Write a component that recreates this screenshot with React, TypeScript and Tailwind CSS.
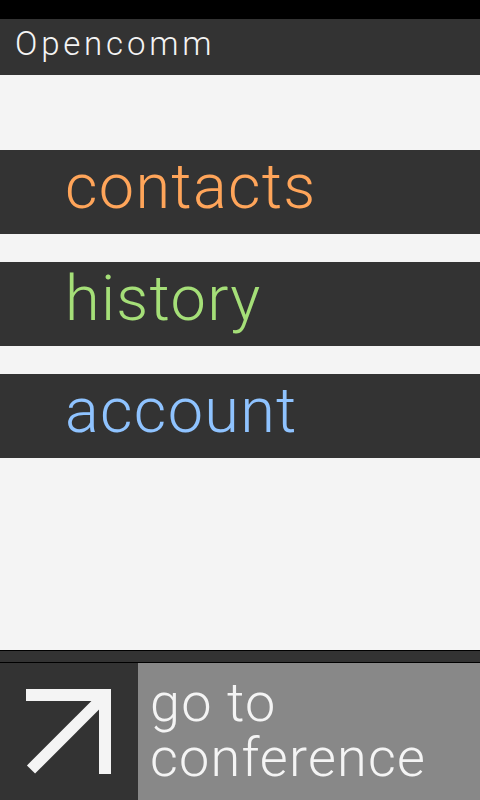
import React from "react";

const font = { fontFamily: "Roboto, 'Liberation Sans', sans-serif" };

function MenuItem({ label, color }: { label: string; color: string }) {
  return (
    <div className="h-[84px] bg-[#333333] flex items-start pl-[65px] pt-[5px]">
      <span className={`text-[63px] font-light leading-none tracking-[1.3px] ${color}`}>{label}</span>
    </div>
  );
}

export default function App() {
  return (
    <div className="w-[480px] h-[800px] bg-[#f4f4f4] flex flex-col overflow-hidden" style={font}>
      <div className="h-[19px] bg-black shrink-0" />
      <div className="h-[56px] bg-[#333333] flex items-start pl-[15px] pt-[8px] shrink-0">
        <span className="text-[33px] font-light text-[#f4f4f4] leading-none tracking-[3.8px]">Opencomm</span>
      </div>
      <div className="flex flex-col gap-[28px] pt-[75px]">
        <MenuItem label="contacts" color="text-[#ffa55a]" />
        <MenuItem label="history" color="text-[#a5df78]" />
        <MenuItem label="account" color="text-[#8fc3ff]" />
      </div>
      <div className="flex-1" />
      <div className="h-[13px] bg-[#333333] border-y border-black shrink-0" />
      <div className="h-[137px] flex shrink-0">
        <div className="w-[138px] bg-[#333333] relative">
          <svg width="138" height="137" viewBox="0 0 138 137" className="block">
            <rect x="26" y="26" width="85" height="12" fill="#f4f4f4" />
            <rect x="99" y="26" width="12" height="85" fill="#f4f4f4" />
            <line x1="31" y1="106.5" x2="106" y2="31.5" stroke="#f4f4f4" strokeWidth="11.5" />
          </svg>
        </div>
        <div className="flex-1 bg-[#888888] pl-[12px] pt-[12px] text-[54px] font-light text-[#f4f4f4] tracking-[1.2px]">
          <div className="h-[55px] leading-[55px]">go to</div>
          <div className="h-[55px] leading-[55px]">conference</div>
        </div>
      </div>
    </div>
  );
}
